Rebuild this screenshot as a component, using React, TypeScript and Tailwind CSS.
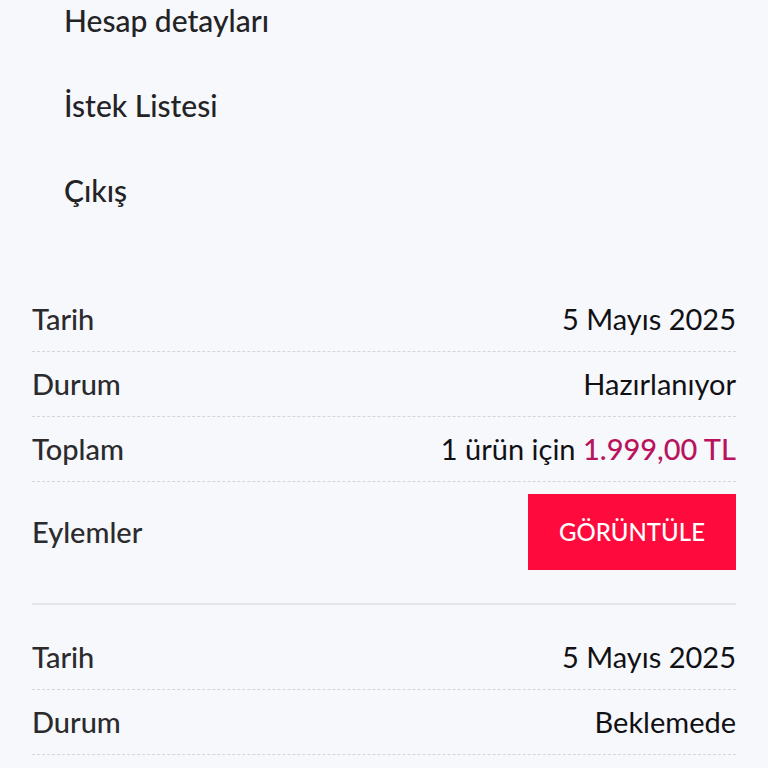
const menu = ["Hesap detayları", "İstek Listesi", "Çıkış"];

type Row = { label: string; value: React.ReactNode };

function OrderTable({ rows, actions }: { rows: Row[]; actions?: boolean }) {
  return (
    <div className="px-8">
      {rows.map((r) => (
        <div
          key={r.label}
          className="flex h-[65px] items-center justify-between border-b border-dashed border-[#d4d5db]"
        >
          <span className="font-medium text-[#2b2b2e]">{r.label}</span>
          <span className="text-[#111114]">{r.value}</span>
        </div>
      ))}
      {actions && (
        <div className="flex items-center justify-between border-b-2 border-[#e2e4ea] pt-3 pb-[33px]">
          <span className="font-medium text-[#2b2b2e]">Eylemler</span>
          <button
            type="button"
            className="h-[76px] w-[208px] bg-[#ff0a3c] text-[24px] font-medium text-white"
          >
            GÖRÜNTÜLE
          </button>
        </div>
      )}
    </div>
  );
}

export default function App() {
  return (
    <div
      className="h-screen overflow-hidden bg-[#f7f8fc] text-[29px]"
      style={{ fontFamily: "Lato, 'Noto Sans', sans-serif" }}
    >
      <ul className="-mt-[22px] pl-16 text-[30px]">
        {menu.map((m) => (
          <li key={m} className="flex h-[85px] items-center font-medium text-[#232326]">
            {m}
          </li>
        ))}
      </ul>
      <div className="mt-[54px]">
        <OrderTable
          actions
          rows={[
            { label: "Tarih", value: "5 Mayıs 2025" },
            { label: "Durum", value: "Hazırlanıyor" },
            {
              label: "Toplam",
              value: (
                <>
                  1 ürün için{" "}
                  <span className="font-medium text-[#b8145e]">1.999,00 TL</span>
                </>
              ),
            },
          ]}
        />
      </div>
      <div className="mt-[20px]">
        <OrderTable
          rows={[
            { label: "Tarih", value: "5 Mayıs 2025" },
            { label: "Durum", value: "Beklemede" },
          ]}
        />
      </div>
    </div>
  );
}
